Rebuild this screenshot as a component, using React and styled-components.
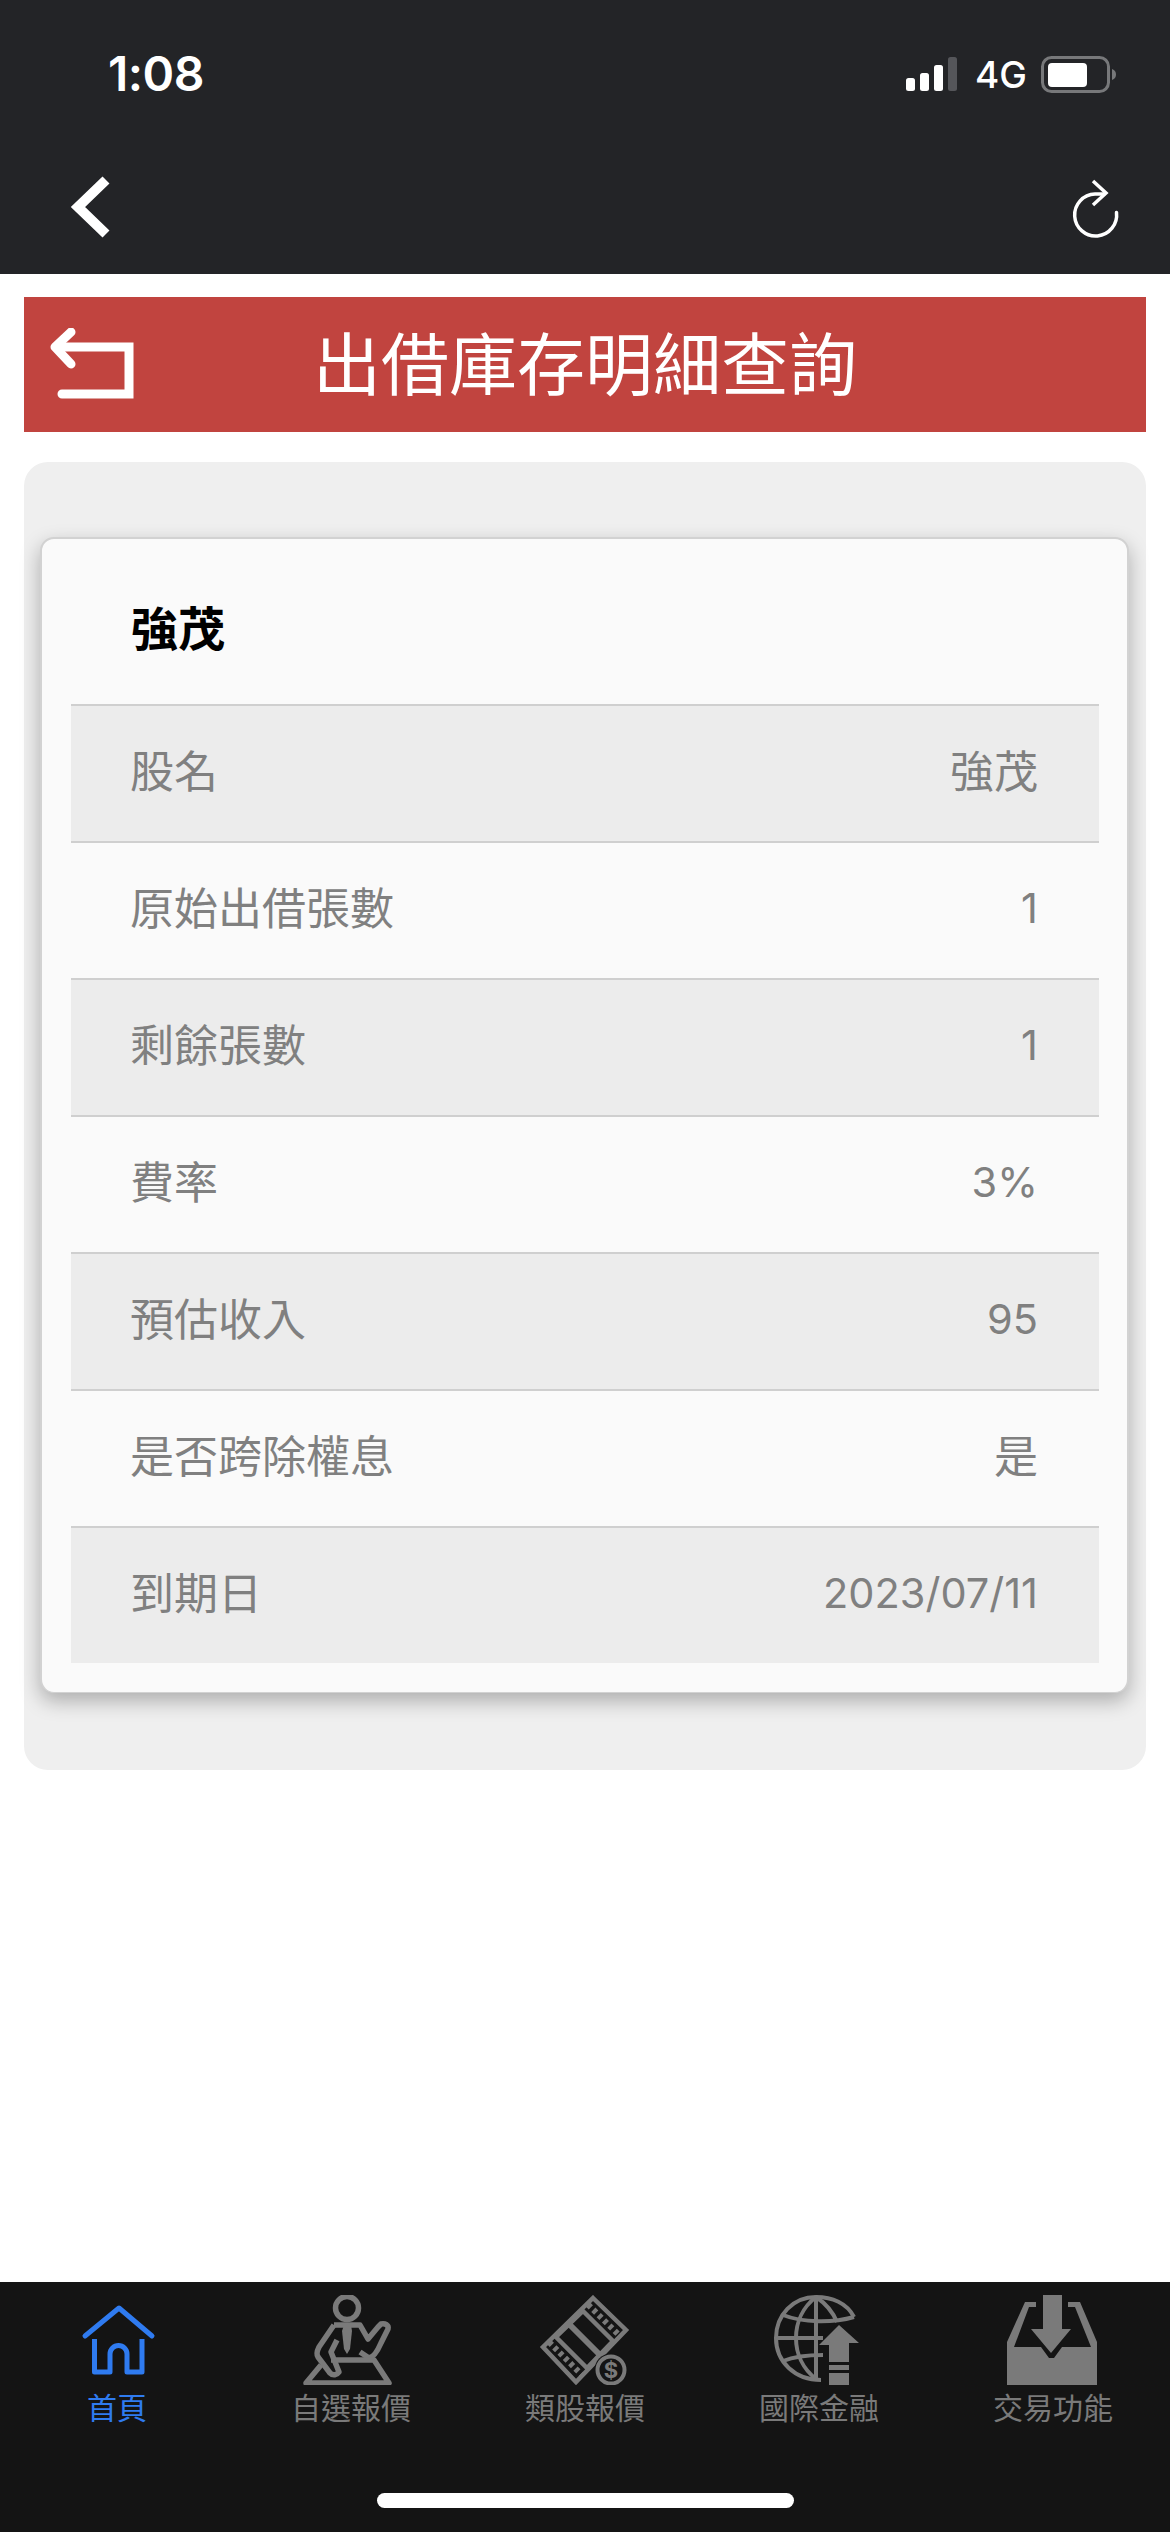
import React from "react";
import styled, { createGlobalStyle } from "styled-components";

const Global = createGlobalStyle`
  html, body { margin: 0; padding: 0; background: #fff; }
  * { box-sizing: border-box; }
  body { font-family: Inter, "Noto Sans CJK TC", sans-serif; }
`;

const Page = styled.div`
  width: 1170px;
  height: 2532px;
  display: flex;
  flex-direction: column;
  overflow: hidden;
  background: #fff;
`;
const Header = styled.header`
  height: 274px;
  background: #232427;
  color: #fff;
  display: flex;
  flex-direction: column;
`;
const StatusBar = styled.div`
  height: 160px;
  padding: 50px 53px 0 108px;
  display: flex;
  justify-content: space-between;
  align-items: flex-start;
`;
const Time = styled.div`
  font-size: 48px;
  font-weight: 600;
  line-height: 48px;
  letter-spacing: -0.5px;
`;
const StatusIcons = styled.div`
  display: flex;
  align-items: center;
  margin-top: 6px;
`;
const NetLabel = styled.span`
  font-size: 37px;
  line-height: 36px;
  font-weight: 500;
  margin: 0 14px 0 17px;
`;
const NavBar = styled.nav`
  flex: 1;
  padding: 14px 45px 0 3px;
  display: flex;
  justify-content: space-between;
  align-items: flex-start;
`;
const Content = styled.main`
  flex: 1;
  padding: 23px 24px 0;
  display: flex;
  flex-direction: column;
  gap: 30px;
`;
const TitleBar = styled.div`
  height: 135px;
  background: #c1443f;
  color: #fff;
  display: grid;
  grid-template-columns: 1fr auto 1fr;
  align-items: center;
`;
const Title = styled.h1`
  margin: -8px 0 0;
  font-family: "Noto Sans CJK TC", sans-serif;
  font-weight: 400;
  font-size: 68px;
  line-height: 1;
`;
const Panel = styled.section`
  height: 1308px;
  background: #efefef;
  border-radius: 24px;
  padding: 75px 17px 0 16px;
`;
const Card = styled.div`
  height: 1156px;
  background: #fafafa;
  border: 2px solid #d2d2d2;
  border-bottom-width: 1px;
  border-radius: 14px;
  box-shadow: 0 8px 20px rgba(0, 0, 0, 0.28);
  padding: 0 28px 0 29px;
`;
const CardTitle = styled.h2`
  margin: 0;
  height: 165px;
  padding: 59px 0 0 60px;
  font-family: "Noto Sans CJK TC", sans-serif;
  font-size: 47px;
  font-weight: 700;
  line-height: 56px;
  color: #000;
`;
const Row = styled.div`
  height: 137px;
  border-top: 2px solid #cfcfcf;
  background: ${(p) => (p.$shaded ? "#ececec" : "#fafafa")};
  padding: 0 61px 3px 59px;
  display: flex;
  justify-content: space-between;
  align-items: center;
  color: #808080;
  font-size: 44px;
  line-height: 1;
`;
const Cell = styled.span`
  font-family: Inter, "Noto Sans CJK TC", sans-serif;
  font-weight: 400;
  font-size: ${(p) => (p.$num ? "41.5px" : "44px")};
`;
const TabBar = styled.footer`
  height: 250px;
  background: #141414;
  padding-top: 13px;
  position: relative;
  display: grid;
  grid-template-columns: repeat(5, 1fr);
  align-items: start;
`;
const Tab = styled.div`
  display: flex;
  flex-direction: column;
  align-items: center;
  color: ${(p) => (p.$active ? "#2f7bf0" : "#7a7a7a")};
`;
const TabLabel = styled.span`
  font-family: "Noto Sans CJK TC", sans-serif;
  font-size: 30px;
  line-height: 40px;
  margin-top: 1px;
`;
const HomeIndicator = styled.div`
  position: absolute;
  left: 377px;
  top: 211px;
  width: 417px;
  height: 15px;
  border-radius: 8px;
  background: #fff;
`;
const Svg = styled.svg`
  display: block;
`;
const ReturnSvg = styled(Svg)`
  margin: 2px 0 0 24px;
`;
const RefreshSvg = styled(Svg)`
  margin-top: 4px;
`;

const Signal = () => (
  <Svg width="52" height="36" viewBox="0 0 52 36">
    <rect x="0" y="21" width="9" height="13" rx="2.5" fill="#fff" />
    <rect x="14" y="16" width="9" height="18" rx="2.5" fill="#fff" />
    <rect x="28" y="8" width="9" height="26" rx="2.5" fill="#fff" />
    <rect x="42" y="0" width="9" height="34" rx="2.5" fill="#55565a" />
  </Svg>
);
const Battery = () => (
  <Svg width="76" height="38" viewBox="0 0 76 38">
    <rect x="1.5" y="1.5" width="66" height="34" rx="9" fill="none" stroke="#77787a" strokeWidth="3" />
    <rect x="7" y="7" width="39" height="24" rx="4" fill="#fff" />
    <path d="M71 13c3 1 4 3 4 5.500s-1 4.500-4 5.500z" fill="#77787a" />
  </Svg>
);
const BackIcon = () => (
  <Svg width="120" height="90" viewBox="0 0 120 90">
    <path d="M103 6L75 33l28 27" fill="none" stroke="#fff" strokeWidth="10" />
  </Svg>
);
const RefreshIcon = () => (
  <RefreshSvg width="60" height="70" viewBox="0 0 60 70">
    <path d="M51.500 34.500A21 21 0 1 1 30 16h9" fill="none" stroke="#fff" strokeWidth="3.500" strokeLinecap="round" />
    <path d="M28 3l13 12-13 12" fill="none" stroke="#fff" strokeWidth="3.500" />
  </RefreshSvg>
);
const ReturnIcon = () => (
  <ReturnSvg width="110" height="76" viewBox="0 0 110 76">
    <path d="M23 4L7 19l16 17" fill="none" stroke="#fff" strokeWidth="9" strokeLinecap="round" strokeLinejoin="round" />
    <path d="M9 19h72v47H14" fill="none" stroke="#fff" strokeWidth="9" strokeLinecap="round" />
  </ReturnSvg>
);

const TabIcon = ({ children }) => (
  <Svg width="100" height="90" viewBox="0 0 100 90">{children}</Svg>
);
const HomeGlyph = () => (
  <TabIcon>
    <path d="M18 41L52 13l33 28" fill="none" stroke="#2f7bf0" strokeWidth="5" strokeLinecap="round" strokeLinejoin="round" />
    <path d="M27.500 44v33H43V59a8.500 8.500 0 0 1 17 0v18h15V44" fill="none" stroke="#2f7bf0" strokeWidth="5" strokeLinejoin="round" />
  </TabIcon>
);
const PersonGlyph = () => (
  <TabIcon>
    <g fill="none" stroke="#7a7a7a" strokeWidth="5.500" strokeLinejoin="round">
      <circle cx="46" cy="13" r="11.500" />
      <path d="M33 30h26l8 14 10-12 3-3c4-1 8 1 7 5l-7 14c-3 7-7 14-12 15l-9-6" />
      <path d="M33 30L18 52c-2 4-3 7-1 10l12 16c3 3 7 2 9-1l-8-20 6-12" />
      <path d="M30 65h43l15 23H5l15-18" />
    </g>
    <path d="M43 30h7l1 6-2 18-3 5-3-5-2-18z" fill="#7a7a7a" />
  </TabIcon>
);
const FilmGlyph = () => (
  <TabIcon>
    <g fill="none" stroke="#7a7a7a">
      <path d="M58 3L91 35 41 87 8 52z" strokeWidth="4.500" />
      <path d="M48 16L78 46 52 73 21 42z" strokeWidth="4.500" />
      <path d="M53 9.500L85 41M14 47L47 80" strokeWidth="6" strokeDasharray="4 3.500" />
      <path d="M34 29L65 60" strokeWidth="6" />
    </g>
    <circle cx="76" cy="75" r="16.500" fill="#141414" />
    <circle cx="76" cy="75" r="13.500" fill="none" stroke="#7a7a7a" strokeWidth="4" />
    <text x="76" y="83" fontFamily="Inter, sans-serif" fontSize="22" fontWeight="700" textAnchor="middle" fill="#7a7a7a">$</text>
  </TabIcon>
);
const GlobeGlyph = () => (
  <TabIcon>
    <g fill="none" stroke="#7a7a7a" strokeWidth="4">
      <path d="M85 22C78 8 63 2 47 2 24 2 7 20 7 43c0 24 19 42 45 42" />
      <path d="M47 2C34 12 27 27 27 43c0 16 7 31 20 41" />
      <path d="M47 2c9 6 16 13 21 25" />
      <path d="M47 2v83" />
      <path d="M14 20c20 8 50 8 71 2" />
      <path d="M7 43h47" />
      <path d="M14 66c10-4 26-6 40-6" />
    </g>
    <path d="M50 50L70 30l20 18H80v19H60V50z" fill="#7a7a7a" />
    <path d="M60 70h20v5H60zM60 78h20v12H60z" fill="#7a7a7a" />
  </TabIcon>
);
const InboxGlyph = () => (
  <TabIcon>
    <path d="M4 90V47L22 7h11v5h32V7h12l17 40v43z" fill="#7a7a7a" />
    <path d="M11 52L26 12h46l16 40H59L51 63H46L38 52z" fill="#141414" />
    <path d="M40 0h19v34h9L48 58 28 34h12z" fill="#7a7a7a" />
  </TabIcon>
);

const rows = [
  ["股名", "強茂", false],
  ["原始出借張數", "1", true],
  ["剩餘張數", "1", true],
  ["費率", "3%", true],
  ["預估收入", "95", true],
  ["是否跨除權息", "是", false],
  ["到期日", "2023/07/11", true],
];

const tabs = [
  ["首頁", HomeGlyph, true],
  ["自選報價", PersonGlyph, false],
  ["類股報價", FilmGlyph, false],
  ["國際金融", GlobeGlyph, false],
  ["交易功能", InboxGlyph, false],
];

export default function App() {
  return (
    <Page>
      <Global />
      <Header>
        <StatusBar>
          <Time>1:08</Time>
          <StatusIcons>
            <Signal />
            <NetLabel>4G</NetLabel>
            <Battery />
          </StatusIcons>
        </StatusBar>
        <NavBar>
          <BackIcon />
          <RefreshIcon />
        </NavBar>
      </Header>
      <Content>
        <TitleBar>
          <ReturnIcon />
          <Title>出借庫存明細查詢</Title>
        </TitleBar>
        <Panel>
          <Card>
            <CardTitle>強茂</CardTitle>
            {rows.map(([label, value, num], i) => (
              <Row key={label} $shaded={i % 2 === 0}>
                <Cell>{label}</Cell>
                <Cell $num={num}>{value}</Cell>
              </Row>
            ))}
          </Card>
        </Panel>
      </Content>
      <TabBar>
        {tabs.map(([label, Glyph, active]) => (
          <Tab key={label} $active={active}>
            <Glyph />
            <TabLabel>{label}</TabLabel>
          </Tab>
        ))}
        <HomeIndicator />
      </TabBar>
    </Page>
  );
}
